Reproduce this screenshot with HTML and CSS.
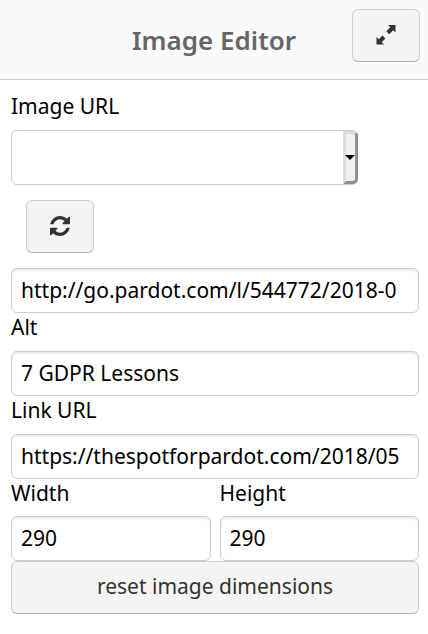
FILE: index.html
```html
<!DOCTYPE html>
<html lang="en">
<head>
    <meta charset="utf-8">
    <title>Image Editor</title>
    <link rel="stylesheet" href="styles.css">
</head>

<body>
    <header class="editor-header">
        <h1 class="editor-title">Image Editor</h1>
        <button type="button" class="btn btn-icon btn-expand" aria-label="Expand">
            <svg class="icon" viewBox="0 0 20 20" aria-hidden="true">
                <path d="M12 0h7.500v7.500l-2.300-2.300-4 4-2.900-2.900 4-4zM.5 19.500v-7.500l2.300 2.300 3.700-3.700 2.900 2.900-3.700 3.700 2.300 2.300z"/>
            </svg>
        </button>
    </header>

    <form class="editor-form">
        <label class="field-label field-label-first" for="imageSource">Image URL</label>
        <div class="select-wrap">
            <select class="select" id="imageSource">
                <option value=""></option>
            </select>
        </div>
        <button type="button" class="btn btn-icon btn-refresh" aria-label="Refresh">
            <svg class="icon" viewBox="0 128 1536 1536" aria-hidden="true">
                <path d="M1511 1056q0 5-1 7-64 268-268 434.500t-478 166.500q-146 0-282.500-55t-243.500-157l-129 129q-19 19-45 19t-45-19-19-45v-448q0-26 19-45t45-19h448q26 0 45 19t19 45-19 45l-137 137q71 66 161 102t187 36q134 0 250-65t186-179q11-17 53-117 8-23 30-23h192q13 0 22.500 9.500t9.500 22.500zm25-800v448q0 26-19 45t-45 19h-448q-26 0-45-19t-19-45 19-45l138-138q-148-137-349-137-134 0-250 65t-186 179q-11 17-53 117-8 23-30 23h-199q-13 0-22.500-9.500t-9.500-22.500v-7q65-268 270-434.500t480-166.500q146 0 284 55.500t245 156.500l130-129q19-19 45-19t45 19 19 45z"/>
            </svg>
        </button>
        <input type="text" class="text-input" aria-label="Image URL" value="http://go.pardot.com/l/544772/2018-0">

        <label class="field-label" for="alt">Alt</label>
        <input type="text" class="text-input" id="alt" value="7 GDPR Lessons">

        <label class="field-label" for="linkUrl">Link URL</label>
        <input type="text" class="text-input" id="linkUrl" value="https://thespotforpardot.com/2018/05">

        <div class="dimensions">
            <div class="dimension">
                <label class="field-label" for="width">Width</label>
                <input type="text" class="text-input" id="width" value="290">
            </div>
            <div class="dimension">
                <label class="field-label" for="height">Height</label>
                <input type="text" class="text-input" id="height" value="290">
            </div>
        </div>
        <button type="button" class="btn btn-reset">reset image dimensions</button>
    </form>
</body>
</html>
```

FILE: styles.css
```css
*,
*::before,
*::after {
    box-sizing: border-box;
}

body {
    margin: 0;
    background: #fff;
    color: #000;
    font-family: "Noto Sans", sans-serif;
    font-size: 21px;
    line-height: 29px;
}

.editor-header {
    display: grid;
    grid-template-columns: 1fr auto 1fr;
    align-items: center;
    height: 80px;
    padding: 0 8px 8px;
    background: #fafafa;
    border-bottom: 1px solid #ccc;
}

.editor-title {
    grid-column: 2;
    margin: 8px 0 0;
    color: #666;
    font-size: 26px;
    font-weight: 600;
    line-height: 36px;
}

.editor-form {
    display: flex;
    flex-direction: column;
    align-items: stretch;
    padding: 8px 9px 20px 11px;
}

.field-label {
    display: block;
    height: 38px;
}

.field-label-first {
    height: 42px;
    padding-top: 4px;
}

/* Buttons */
.btn {
    height: 53px;
    padding: 0;
    background: #f4f4f4;
    border: 1px solid #ccc;
    border-bottom-color: #b3b3b3;
    border-radius: 6px;
    color: #333;
    font: inherit;
    cursor: pointer;
}

.btn-icon {
    display: flex;
    align-items: center;
    justify-content: center;
    width: 68px;
}

.btn-expand {
    justify-self: end;
}

.btn-refresh {
    margin: 15px 0 15px 15px;
}

.btn-reset {
    padding-bottom: 3px;
}

.icon {
    width: 20px;
    height: 20px;
    margin-bottom: 2px;
    fill: #333;
}

/* Inputs */
.text-input {
    display: block;
    width: 100%;
    height: 45px;
    padding: 0 9px 2px;
    background: #fff;
    border: 1px solid #ccc;
    border-radius: 6px;
    box-shadow: inset 0 2px 2px rgba(0, 0, 0, 0.075);
    color: #000;
    font: inherit;
}

.select-wrap {
    position: relative;
    width: 85%;
}

.select {
    display: block;
    width: 100%;
    height: 55px;
    padding: 0 24px 0 9px;
    appearance: none;
    background: #fff;
    border: 1px solid #ccc;
    border-radius: 6px;
    font: inherit;
}

/* beveled drop-down handle over the right edge of the select */
.select-wrap::before {
    content: "";
    position: absolute;
    top: 1px;
    right: 0;
    bottom: 1px;
    width: 15px;
    background: #f0f0f0;
    border: 3px solid;
    border-color: #ddd #909090 #909090 #ddd;
    border-radius: 0 5px 5px 0;
    pointer-events: none;
}

.select-wrap::after {
    content: "";
    position: absolute;
    top: 25px;
    right: 3px;
    border: 5px solid transparent;
    border-top-color: #000;
    border-bottom: 0;
    pointer-events: none;
}

.dimensions {
    display: grid;
    grid-template-columns: 1fr 1fr;
    gap: 9px;
}

.dimensions .field-label {
    height: 37px;
}
```
